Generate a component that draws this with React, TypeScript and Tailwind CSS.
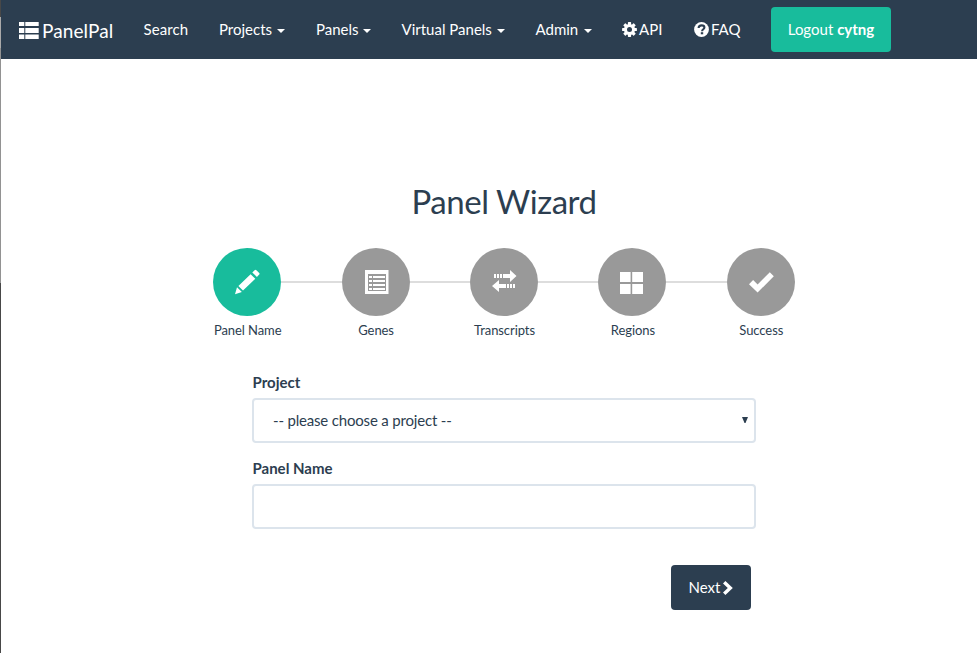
import React from "react";

const ink = "#2c3e50";

function Caret({ gap }: { gap: string }) {
  return (
    <svg width="8" height="4" viewBox="0 0 8 4" className={`mt-[2px] shrink-0 ${gap}`} fill="white">
      <path d="M0 0h8L4 4z" />
    </svg>
  );
}

function BrandIcon() {
  return (
    <svg width="20" height="17" viewBox="0 0 20 17" fill="white" className="shrink-0">
      <path d="M0 0h5.3v4H0zM6.3 0h13.4v4H6.3zM0 6h5.3v5H0zM6.3 6h13.4v5H6.3zM0 12.4h5.3V17H0zM6.3 12.4h13.4V17H6.3z" />
    </svg>
  );
}

function GearIcon() {
  return (
    <svg width="15" height="15" viewBox="-7.5 -7.5 15 15" className="shrink-0">
      <g fill="white">
        <rect x="-1.6" y="-7.4" width="3.2" height="14.8" rx=".6" />
        <rect x="-1.6" y="-7.4" width="3.2" height="14.8" rx=".6" transform="rotate(45)" />
        <rect x="-1.6" y="-7.4" width="3.2" height="14.8" rx=".6" transform="rotate(90)" />
        <rect x="-1.6" y="-7.4" width="3.2" height="14.8" rx=".6" transform="rotate(135)" />
        <circle r="5.5" />
      </g>
      <circle r="2.5" fill={ink} />
    </svg>
  );
}

function QuestionIcon() {
  return (
    <svg width="15" height="15" viewBox="0 0 15 15" className="shrink-0">
      <circle cx="7.5" cy="7.5" r="7.4" fill="white" />
      <path d="M4.6 6C4.6 4 6 3.4 7.6 3.4s2.8.8 2.8 2.2c0 1.7-2.3 1.6-2.3 3.6" fill="none" stroke={ink} strokeWidth="2.1" />
      <rect x="6.8" y="10.2" width="2.4" height="2.1" fill={ink} />
    </svg>
  );
}

function PencilIcon() {
  return (
    <svg width="26" height="26" viewBox="0 0 26 26" fill="white">
      <path d="M1 25.2 3 18.2 7.9 23.1zM4.4 16.9 16.6 5.2 21.3 9.7 9 21.6zM18.3 3.4 20.6 1.2Q21.5.4 22.4 1.2L25.2 3.9Q26 4.8 25.2 5.6L22.9 8z" />
    </svg>
  );
}

function ListIcon() {
  return (
    <svg width="24" height="24" viewBox="0 0 24 24" className="ml-[2px]">
      <path fill="white" fillRule="evenodd" d="M0 0h23.5v24H0zM3 4v17h18V4z" />
      <path fill="white" d="M4 6h3v2H4zM8 6h12v2H8zM4 10h3v2H4zM8 10h12v2H8zM4 14h3v2H4zM8 14h12v2H8zM4 18h3v2H4zM8 18h12v2H8z" />
    </svg>
  );
}

function TransferIcon() {
  return (
    <svg width="25" height="22" viewBox="0 0 25 22" fill="white" className="mb-[2px]">
      <path d="M2 4h2v4H2zM5 4h2v4H5zM8 4h2v4H8zM11 4h7V0l6.5 6L18 12V8h-7zM14 14v4H7v4L0 16l7-6v4zM15 14h2v4h-2zM18 14h2v4h-2zM21 14h2v4h-2z" />
    </svg>
  );
}

function GridIcon() {
  return (
    <svg width="23" height="22" viewBox="0 0 23 22" fill="white" className="mr-[2px] mt-[2px]">
      <path d="M0 0h10.6v10H0zM12.2 0H23v10H12.2zM0 12h10.6v10H0zM12.2 12H23v10H12.2z" />
    </svg>
  );
}

function CheckIcon() {
  return (
    <svg width="25" height="21" viewBox="0 0 25 21" fill="white" className="ml-[2px] mt-[1px]">
      <path d="M0 12.2 4.1 8.1 8.6 12.4 20.8.2 24.8 4.2 8.6 20.6z" />
    </svg>
  );
}

const menu = [
  { label: "Search", caret: "", width: "w-[75.5px] tracking-[0.1px]" },
  { label: "Projects", caret: "ml-[5px]", width: "w-[97px]" },
  { label: "Panels", caret: "ml-[4.5px]", width: "w-[85.5px]" },
  { label: "Virtual Panels", caret: "ml-[5.5px]", width: "w-[134px]" },
  { label: "Admin", caret: "ml-[5.5px]", width: "w-[86.5px]" },
];

const steps = [
  { label: "Panel Name", icon: <PencilIcon />, active: true },
  { label: "Genes", icon: <ListIcon />, active: false },
  { label: "Transcripts", icon: <TransferIcon />, active: false },
  { label: "Regions", icon: <GridIcon />, active: false },
  { label: "Success", icon: <CheckIcon />, active: false },
];

export default function App() {
  return (
    <div className="flex h-[653px] w-[977px] overflow-hidden bg-white font-['Lato',sans-serif] text-[15px] leading-[21px] text-[#2c3e50]">
      <div className="flex w-px shrink-0 flex-col">
        <div className="h-[17px] bg-[#484848]" />
        <div className="h-[31px] bg-[#aaaaaa]" />
        <div className="h-[235px] bg-[#929292]" />
        <div className="flex-1 bg-[#484848]" />
      </div>
      <div className="min-w-0 flex-1">
        <nav className="flex h-[59px] items-center bg-[#2c3e50] pl-[18px] text-white">
          <a className="flex w-[124.5px] shrink-0 items-center gap-[3px] pt-[2px] text-[19px] tracking-[0.1px]">
            <BrandIcon />
            <span>PanelPal</span>
          </a>
          {menu.map((item) => (
            <a key={item.label} className={`flex shrink-0 items-center whitespace-nowrap ${item.width}`}>
              {item.label}
              {item.caret && <Caret gap={item.caret} />}
            </a>
          ))}
          <a className="flex w-[72px] shrink-0 items-center gap-[2px]">
            <GearIcon />
            API
          </a>
          <a className="flex w-[77px] shrink-0 items-center gap-[2px]">
            <QuestionIcon />
            FAQ
          </a>
          <button className="h-[45px] w-[120px] shrink-0 whitespace-nowrap rounded bg-[#18bc9c]">
            Logout <b>cytng</b>
          </button>
        </nav>

        <h1 className="pl-[30px] pt-[124px] text-center text-[33px] leading-[36px] tracking-[-0.45px]">Panel Wizard</h1>

        <div className="ml-[182px] mt-[29px] grid w-[642px] grid-cols-5">
          {steps.map((step, i) => (
            <div key={step.label}>
              <div className="flex items-center">
                <div className={`h-[2px] flex-1 ${i === 0 ? "" : "bg-[#dddddd]"}`} />
                <div className={`flex size-[68px] items-center justify-center rounded-full ${step.active ? "bg-[#18bc9c]" : "bg-[#999999]"}`}>
                  {step.icon}
                </div>
                <div className={`h-[2px] flex-1 ${i === 4 ? "" : "bg-[#dddddd]"}`} />
              </div>
              <div className="mt-[5px] pl-[1px] text-center text-[13px] leading-[18px] tracking-[-0.08px]">{step.label}</div>
            </div>
          ))}
        </div>

        <form className="ml-[251px] mt-[33px] w-[504px]">
          <label className="block pl-[0.5px] font-bold">Project</label>
          <div className="mt-[5px] flex h-[45px] items-center justify-between rounded border-2 border-[#dce4ec] pl-[19px] pr-[6px]">
            <span className="tracking-[-0.18px]">-- please choose a project --</span>
            <svg width="6" height="6" viewBox="0 0 6 6" fill={ink} className="mb-[2px]">
              <path d="M0 0h6L3.5 6h-1z" />
            </svg>
          </div>
          <label className="mt-[15px] block pl-[0.5px] font-bold">Panel Name</label>
          <input className="mt-[5px] block h-[45px] w-full rounded border-2 border-[#dce4ec] bg-white px-[19px] outline-none" />
          <button type="button" className="ml-[419px] mt-[36px] flex h-[45px] w-[80px] items-center justify-center gap-[3px] rounded bg-[#2c3e50] text-white">
            Next
            <svg width="10" height="14" viewBox="0 0 10 14" fill="white">
              <path d="M0 2.4 2.4 0 9.8 7 2.4 14 0 11.6 4.8 7z" />
            </svg>
          </button>
        </form>
      </div>
    </div>
  );
}
